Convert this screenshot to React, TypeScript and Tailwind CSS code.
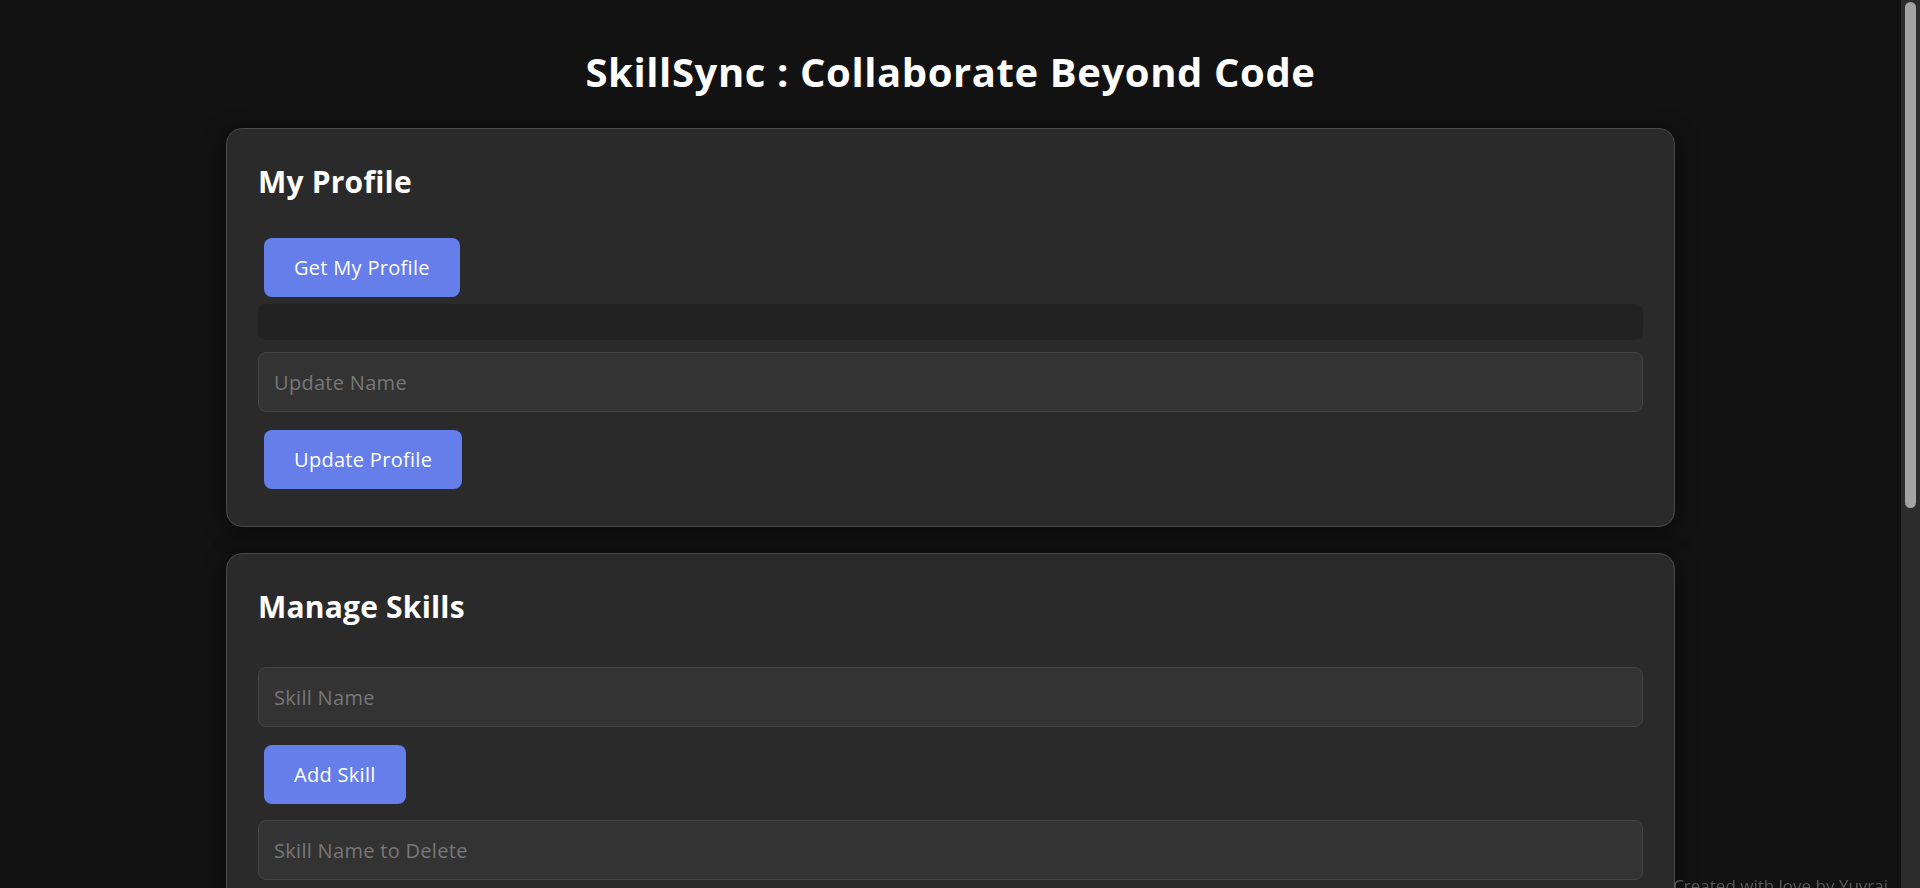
const font = { fontFamily: '"Open Sans", "Liberation Sans", sans-serif' };

function Button({ children }: { children: string }) {
  return (
    <button
      type="button"
      className="ml-[6px] h-[59px] self-start rounded-lg bg-[#667eea] px-[30px] text-[20px] tracking-[0.3px] text-white"
    >
      {children}
    </button>
  );
}

function Field({ placeholder }: { placeholder: string }) {
  return (
    <input
      type="text"
      placeholder={placeholder}
      className="h-[60px] w-full rounded-lg border border-[#444] bg-[#333] px-[15px] text-[20px] tracking-[0.3px] text-white outline-none placeholder:text-[#777]"
    />
  );
}

function Card({ title, children }: { title: string; children: React.ReactNode }) {
  return (
    <section className="mx-auto flex w-[1449px] flex-col rounded-2xl border border-[#4a4a4a] bg-[#2a2a2a] px-[31px] pt-[35px] pb-[37px] shadow-[0_4px_24px_rgba(0,0,0,0.45)]">
      <h2 className="h-[36px] text-[30px] leading-[36px] font-bold tracking-[0.2px] text-white">{title}</h2>
      {children}
    </section>
  );
}

export default function App() {
  return (
    <div style={font} className="flex h-screen overflow-hidden bg-[#121212]">
      <main className="flex-1 overflow-hidden">
        <h1 className="pt-[48px] text-center text-[40px] leading-[48px] font-bold tracking-[0.6px] text-white">
          SkillSync : Collaborate Beyond Code
        </h1>

        <div className="mt-[32px] flex flex-col gap-[26px] pb-[240px]">
          <Card title="My Profile">
            <div className="mt-[38px] flex flex-col">
              <Button>Get My Profile</Button>
              <div className="mt-[7px] h-[36px] rounded-lg bg-[#222]" />
              <div className="mt-[12px]">
                <Field placeholder="Update Name" />
              </div>
              <div className="mt-[18px] flex">
                <Button>Update Profile</Button>
              </div>
            </div>
          </Card>

          <Card title="Manage Skills">
            <div className="mt-[42px] flex flex-col">
              <Field placeholder="Skill Name" />
              <div className="mt-[18px] flex">
                <Button>Add Skill</Button>
              </div>
              <div className="mt-[16px]">
                <Field placeholder="Skill Name to Delete" />
              </div>
              <div className="mt-[18px] flex">
                <Button>Delete Skill</Button>
              </div>
            </div>
          </Card>
        </div>
      </main>

      {/* scrollbar */}
      <aside className="w-[19px] shrink-0 bg-[#2c2c2c] px-[4px] pt-[2px]">
        <div className="h-[506px] rounded-full bg-[#a3a3a3]" />
      </aside>

      <p className="fixed top-[874px] right-[32px] text-[17px] leading-[24px] text-[#5a5a5a]">
        Created with love by Yuvraj
      </p>
    </div>
  );
}
